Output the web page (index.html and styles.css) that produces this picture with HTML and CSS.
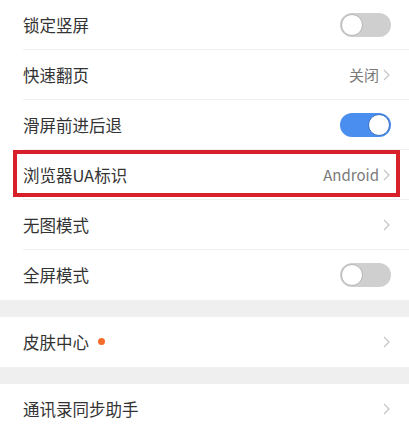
FILE: index.html
```html
<!DOCTYPE html>
<html lang="zh-CN">
<head>
<meta charset="utf-8">
<title>设置</title>
<link rel="stylesheet" href="styles.css">
</head>
<body>
<div class="page">
  <div class="group">
    <div class="row">
      <span class="label">锁定竖屏</span>
      <span class="switch"><span class="knob"></span></span>
    </div>
    <div class="row">
      <span class="label">快速翻页</span>
      <span class="value">关闭<svg class="chev" viewBox="0 0 7 12"><path d="M1 1l5 5-5 5" fill="none" stroke="#c4c4c4" stroke-width="1.2"/></svg></span>
    </div>
    <div class="row">
      <span class="label">滑屏前进后退</span>
      <span class="switch on"><span class="knob"></span></span>
    </div>
    <div class="row highlighted">
      <span class="label">浏览器UA标识</span>
      <span class="value">Android<svg class="chev" viewBox="0 0 7 12"><path d="M1 1l5 5-5 5" fill="none" stroke="#c4c4c4" stroke-width="1.2"/></svg></span>
      <span class="mark"></span>
    </div>
    <div class="row">
      <span class="label">无图模式</span>
      <span class="value"><svg class="chev" viewBox="0 0 7 12"><path d="M1 1l5 5-5 5" fill="none" stroke="#c4c4c4" stroke-width="1.2"/></svg></span>
    </div>
    <div class="row last">
      <span class="label">全屏模式</span>
      <span class="switch"><span class="knob"></span></span>
    </div>
  </div>
  <div class="band"></div>
  <div class="group">
    <div class="row last">
      <span class="label">皮肤中心<span class="dot"></span></span>
      <span class="value"><svg class="chev" viewBox="0 0 7 12"><path d="M1 1l5 5-5 5" fill="none" stroke="#c4c4c4" stroke-width="1.2"/></svg></span>
    </div>
  </div>
  <div class="band"></div>
  <div class="group">
    <div class="row last">
      <span class="label">通讯录同步助手</span>
      <span class="value"><svg class="chev" viewBox="0 0 7 12"><path d="M1 1l5 5-5 5" fill="none" stroke="#c4c4c4" stroke-width="1.2"/></svg></span>
    </div>
  </div>
</div>
</body>
</html>
```
FILE: styles.css
```css
html, body {
  margin: 0;
  padding: 0;
  background: #ffffff;
}
body {
  font-family: "Noto Sans CJK SC", "Noto Sans", sans-serif;
  color: #333333;
}
.page {
  width: 409px;
  overflow: hidden;
}
.group {
  background: #ffffff;
  padding-left: 23px;
}
.row {
  position: relative;
  height: 49px;
  border-bottom: 1px solid #f0f0f0;
  display: flex;
  align-items: center;
  justify-content: space-between;
  padding-right: 18px;
}
.row.last {
  border-bottom: 1px solid #ffffff;
}
.label {
  font-size: 16.5px;
  line-height: 20px;
  display: flex;
  align-items: center;
  color: #333333;
}
.value {
  display: flex;
  align-items: center;
  font-size: 15px;
  color: #7a7a7a;
}
.chev {
  width: 7px;
  height: 12px;
  margin-left: 4px;
  margin-right: 1px;
}
.switch {
  position: relative;
  width: 51px;
  height: 24px;
  border-radius: 12px;
  background: #cfcfcf;
  box-sizing: border-box;
}
.switch .knob {
  position: absolute;
  top: 1px;
  left: 1px;
  width: 22px;
  height: 22px;
  box-sizing: border-box;
  border-radius: 50%;
  background: #ffffff;
  border: 1px solid #b5b5b5;
}
.switch.on {
  background: #4a8ef0;
}
.switch.on .knob {
  left: auto;
  right: 1px;
  border-color: #3a6fc0;
}
.dot {
  display: inline-block;
  width: 7px;
  height: 7px;
  border-radius: 50%;
  background: #f36c2c;
  margin-left: 9px;
}
.band {
  height: 17px;
  background: #efefef;
}
.mark {
  position: absolute;
  left: -10px;
  top: 0;
  width: 387px;
  height: 47px;
  box-sizing: border-box;
  border: 4px solid #d8202b;
}
```
